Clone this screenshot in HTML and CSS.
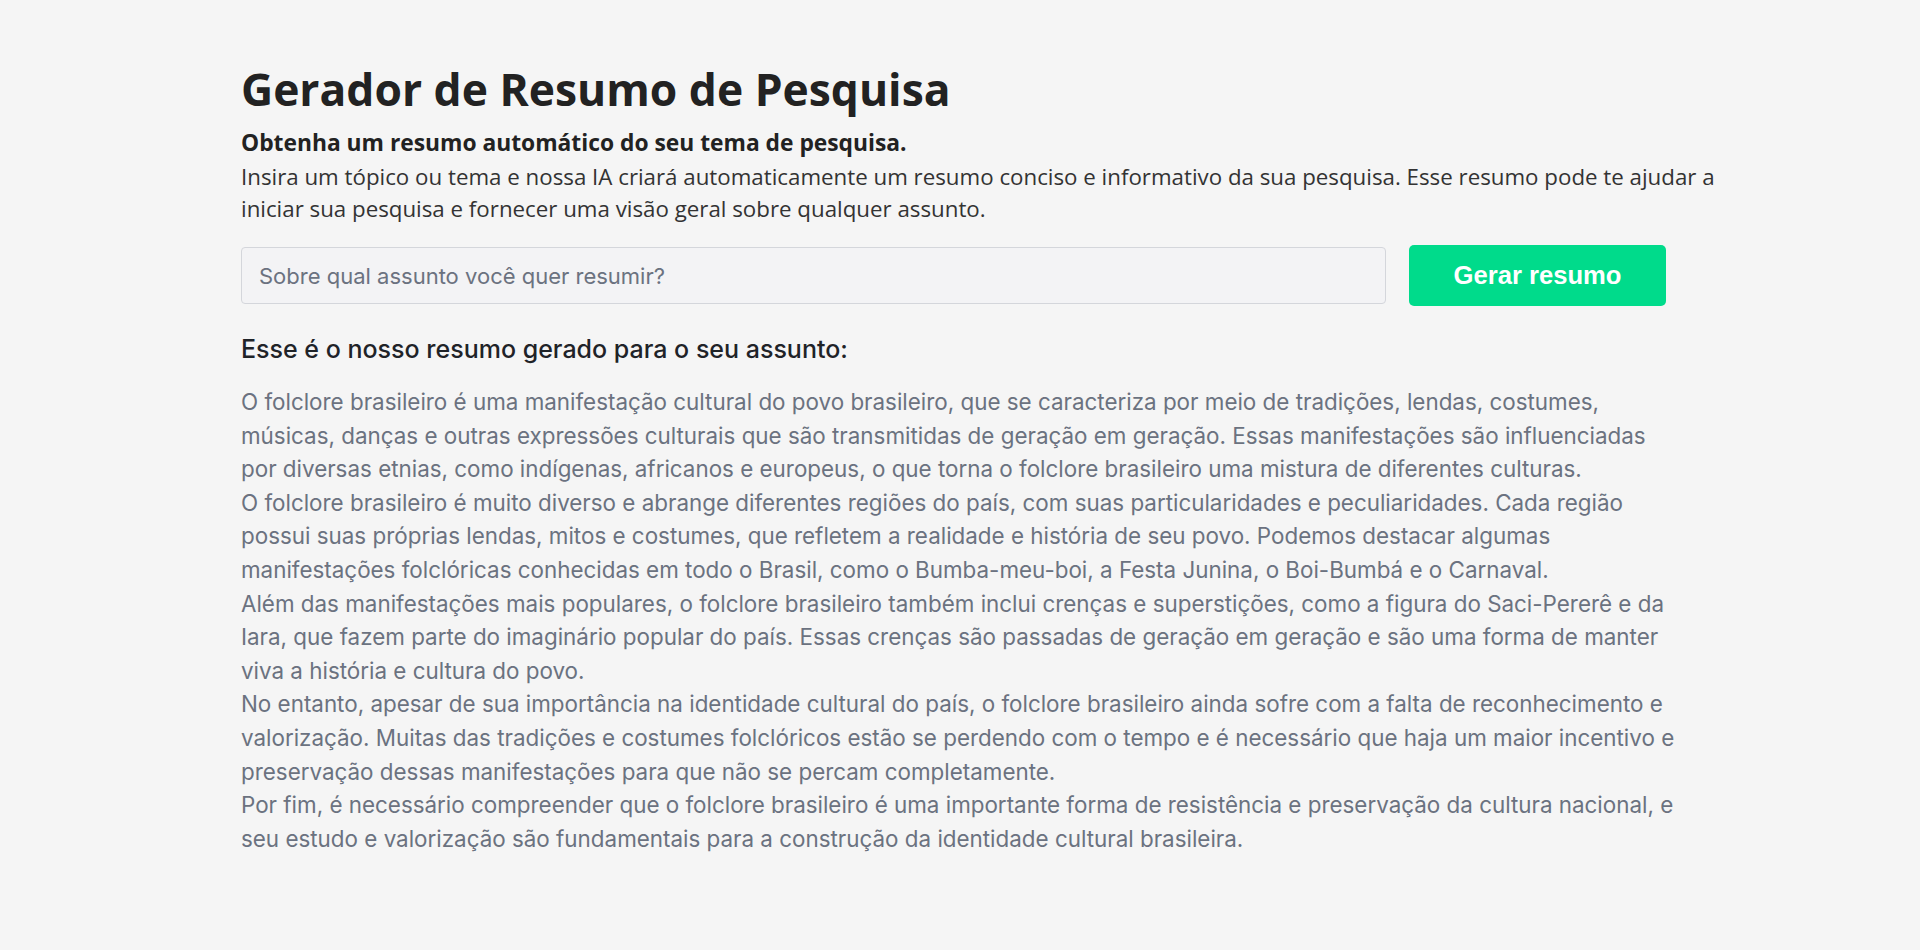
FILE: index.html
```html
<!DOCTYPE html>
<html lang="pt-BR">
<head>
<meta charset="utf-8">
<title>Gerador de Resumo de Pesquisa</title>
<link rel="stylesheet" href="styles.css">
</head>
<body>
<main class="page">
  <header class="intro">
    <h1 class="title">Gerador de Resumo de Pesquisa</h1>
    <p class="lead">Obtenha um resumo automático do seu tema de pesquisa.</p>
    <p class="desc">Insira um tópico ou tema e nossa IA criará automaticamente um resumo conciso e informativo da sua pesquisa. Esse resumo pode te ajudar a iniciar sua pesquisa e fornecer uma visão geral sobre qualquer assunto.</p>
  </header>
  <form class="search" onsubmit="return false">
    <input class="search-input" type="text" placeholder="Sobre qual assunto você quer resumir?">
    <button class="search-button" type="submit">Gerar resumo</button>
  </form>
  <section class="result">
    <h2 class="result-title">Esse é o nosso resumo gerado para o seu assunto:</h2>
    <div class="result-text">
      <p>O folclore brasileiro é uma manifestação cultural do povo brasileiro, que se caracteriza por meio de tradições, lendas, costumes, músicas, danças e outras expressões culturais que são transmitidas de geração em geração. Essas manifestações são influenciadas por diversas etnias, como indígenas, africanos e europeus, o que torna o folclore brasileiro uma mistura de diferentes culturas.</p>
      <p>O folclore brasileiro é muito diverso e abrange diferentes regiões do país, com suas particularidades e peculiaridades. Cada região possui suas próprias lendas, mitos e costumes, que refletem a realidade e história de seu povo. Podemos destacar algumas manifestações folclóricas conhecidas em todo o Brasil, como o Bumba-meu-boi, a Festa Junina, o Boi-Bumbá e o Carnaval.</p>
      <p>Além das manifestações mais populares, o folclore brasileiro também inclui crenças e superstições, como a figura do Saci-Pererê e da Iara, que fazem parte do imaginário popular do país. Essas crenças são passadas de geração em geração e são uma forma de manter viva a história e cultura do povo.</p>
      <p>No entanto, apesar de sua importância na identidade cultural do país, o folclore brasileiro ainda sofre com a falta de reconhecimento e valorização. Muitas das tradições e costumes folclóricos estão se perdendo com o tempo e é necessário que haja um maior incentivo e preservação dessas manifestações para que não se percam completamente.</p>
      <p>Por fim, é necessário compreender que o folclore brasileiro é uma importante forma de resistência e preservação da cultura nacional, e seu estudo e valorização são fundamentais para a construção da identidade cultural brasileira.</p>
    </div>
  </section>
</main>
</body>
</html>
```

FILE: styles.css
```css
* { box-sizing: border-box; }

html, body {
  margin: 0;
  padding: 0;
  background: #f5f5f5;
}

.page {
  padding: 59px 0 40px 241px;
  font-family: Inter, "Noto Sans", sans-serif;
}

.intro {
  width: 1500px;
}

.title {
  margin: 0;
  font-family: "Open Sans", sans-serif;
  font-weight: 700;
  font-size: 44.4px;
  line-height: 60px;
  color: #222222;
}

.lead {
  margin: 8px 0 0;
  font-family: "Open Sans", sans-serif;
  font-weight: 700;
  font-size: 22.8px;
  line-height: 32px;
  color: #222222;
}

.desc {
  margin: 2px 0 0;
  font-family: "Open Sans", sans-serif;
  font-size: 22.3px;
  line-height: 32px;
  color: #333333;
}

.search {
  display: flex;
  gap: 23px;
  width: 1425px;
  margin-top: 20px;
  align-items: center;
}

.search-input {
  flex: 1;
  height: 57px;
  padding: 0 17px;
  border: 1px solid #d4d6db;
  border-radius: 4px;
  background: #f3f3f5;
  font-family: Inter, sans-serif;
  font-size: 22px;
  color: #374151;
  outline: none;
}

.search-input::placeholder {
  color: #6b7280;
}

.search-button {
  width: 257px;
  height: 61px;
  border: 0;
  border-radius: 5px;
  background: #00db8b;
  color: #ffffff;
  font-family: "Liberation Sans", Arial, sans-serif;
  font-weight: 700;
  font-size: 25.6px;
  cursor: pointer;
}

.result {
  width: 1440px;
  margin-top: 27px;
}

.result-title {
  margin: 0;
  font-family: Inter, sans-serif;
  font-weight: 500;
  font-size: 25px;
  line-height: 32px;
  color: #1f2328;
}

.result-text {
  margin-top: 20px;
  font-family: Inter, sans-serif;
  font-size: 22.4px;
  line-height: 33.6px;
  color: #6b7280;
}

.result-text p {
  margin: 0;
}
```
